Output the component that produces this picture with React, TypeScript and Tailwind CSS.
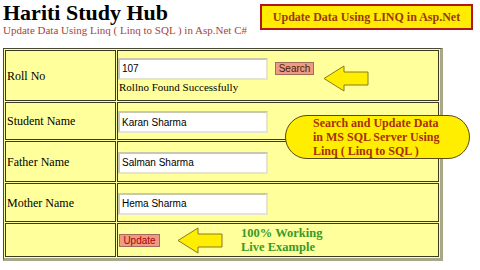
import React from 'react';

function Arrow({ className = '' }: { className?: string }) {
  return (
    <svg width="46" height="27" viewBox="0 0 46 27" className={className}>
      <polygon
        points="1,13.5 21,1 21,7 45,7 45,20 21,20 21,26"
        fill="#ffee00"
        stroke="#8a7a20"
        strokeWidth="1"
        strokeLinejoin="round"
      />
    </svg>
  );
}

const inputCls =
  "w-[150px] h-[22px] bg-white border-2 border-t-[#c8c8b0] border-l-[#c8c8b0] border-r-[#e4e4d0] border-b-[#e4e4d0] px-[2px] text-[10px] text-black font-['Liberation_Sans',Arial,sans-serif] outline-none";

const labelCls = "w-[111px] border border-[#3a3a20] px-[1px] text-[12px] text-black align-middle";
const valueCls = "w-[322px] border border-[#3a3a20] px-[0px] align-middle relative";

export default function App() {
  return (
    <div className="w-[480px] h-[270px] bg-white relative overflow-hidden font-['Liberation_Serif','Times_New_Roman',serif]">
      {/* Header */}
      <div className="flex items-start">
        <div className="pl-[3px]">
          <h1 className="text-[22px] font-bold leading-[25px] text-black">Hariti Study Hub</h1>
          <p className="text-[11px] leading-[11px] text-[#a8443c]">
            Update Data Using Linq ( Linq to SQL ) in Asp.Net C#
          </p>
        </div>
        <div className="ml-auto mr-[7px] mt-[4px] w-[213px] h-[26px] bg-[#ffec00] border-2 border-[#b01818] flex items-center justify-center">
          <span className="text-[12px] font-bold text-[#9a3a0c]">Update Data Using LINQ in Asp.Net</span>
        </div>
      </div>

      {/* Form table */}
      <table className="mt-[12px] ml-[3px] border-separate border-spacing-[1px] bg-[#ffff9c] border-t border-l border-[#4a4a30] border-r-[3px] border-b-[3px] border-r-[#a8a888] border-b-[#a8a888]">
        <tbody>
          <tr className="h-[51px]">
            <td className={labelCls}>Roll No</td>
            <td className={valueCls}>
              <div className="flex items-center gap-[7px]">
                <input className={inputCls} defaultValue="107" />
                <button className="w-[39px] h-[13px] bg-[#ec9c84] border border-[#a86a58] text-[10px] leading-[11px] text-[#4a1a10] font-['Liberation_Sans',Arial,sans-serif]">
                  Search
                </button>
              </div>
              <div className="text-[11px] leading-[13px] pl-[1px] mt-[1px]">Rollno Found Successfully</div>
              <Arrow className="absolute left-[205px] top-[14px]" />
            </td>
          </tr>
          <tr className="h-[38px]">
            <td className={labelCls}>Student Name</td>
            <td className={valueCls}>
              <input className={inputCls} defaultValue="Karan Sharma" />
            </td>
          </tr>
          <tr className="h-[41px]">
            <td className={labelCls}>Father Name</td>
            <td className={valueCls}>
              <input className={inputCls} defaultValue="Salman Sharma" />
            </td>
          </tr>
          <tr className="h-[39px]">
            <td className={labelCls}>Mother Name</td>
            <td className={valueCls}>
              <input className={inputCls} defaultValue="Hema Sharma" />
            </td>
          </tr>
          <tr className="h-[34px]">
            <td className={labelCls}></td>
            <td className={valueCls}>
              <div className="flex items-center">
                <button className="ml-[1px] w-[41px] h-[13px] bg-[#ec9c84] border border-[#a86a58] text-[10px] leading-[11px] text-[#b00000] font-['Liberation_Sans',Arial,sans-serif]">
                  Update
                </button>
                <Arrow className="ml-[17px]" />
                <div className="ml-[18px] text-[12.5px] leading-[14px] font-bold text-[#3a9a2a]">
                  100% Working
                  <br />
                  Live Example
                </div>
              </div>
            </td>
          </tr>
        </tbody>
      </table>

      {/* Callout */}
      <div className="absolute left-[285px] top-[115px] w-[185px] h-[44px] rounded-[22px] bg-[#ffee00] border border-[#5a4a10] flex items-center pl-[27px]">
        <p className="text-[12px] leading-[14px] font-bold text-[#a8300c]">
          Search and Update Data
          <br />
          in MS SQL Server Using
          <br />
          Linq ( Linq to SQL )
        </p>
      </div>
    </div>
  );
}
